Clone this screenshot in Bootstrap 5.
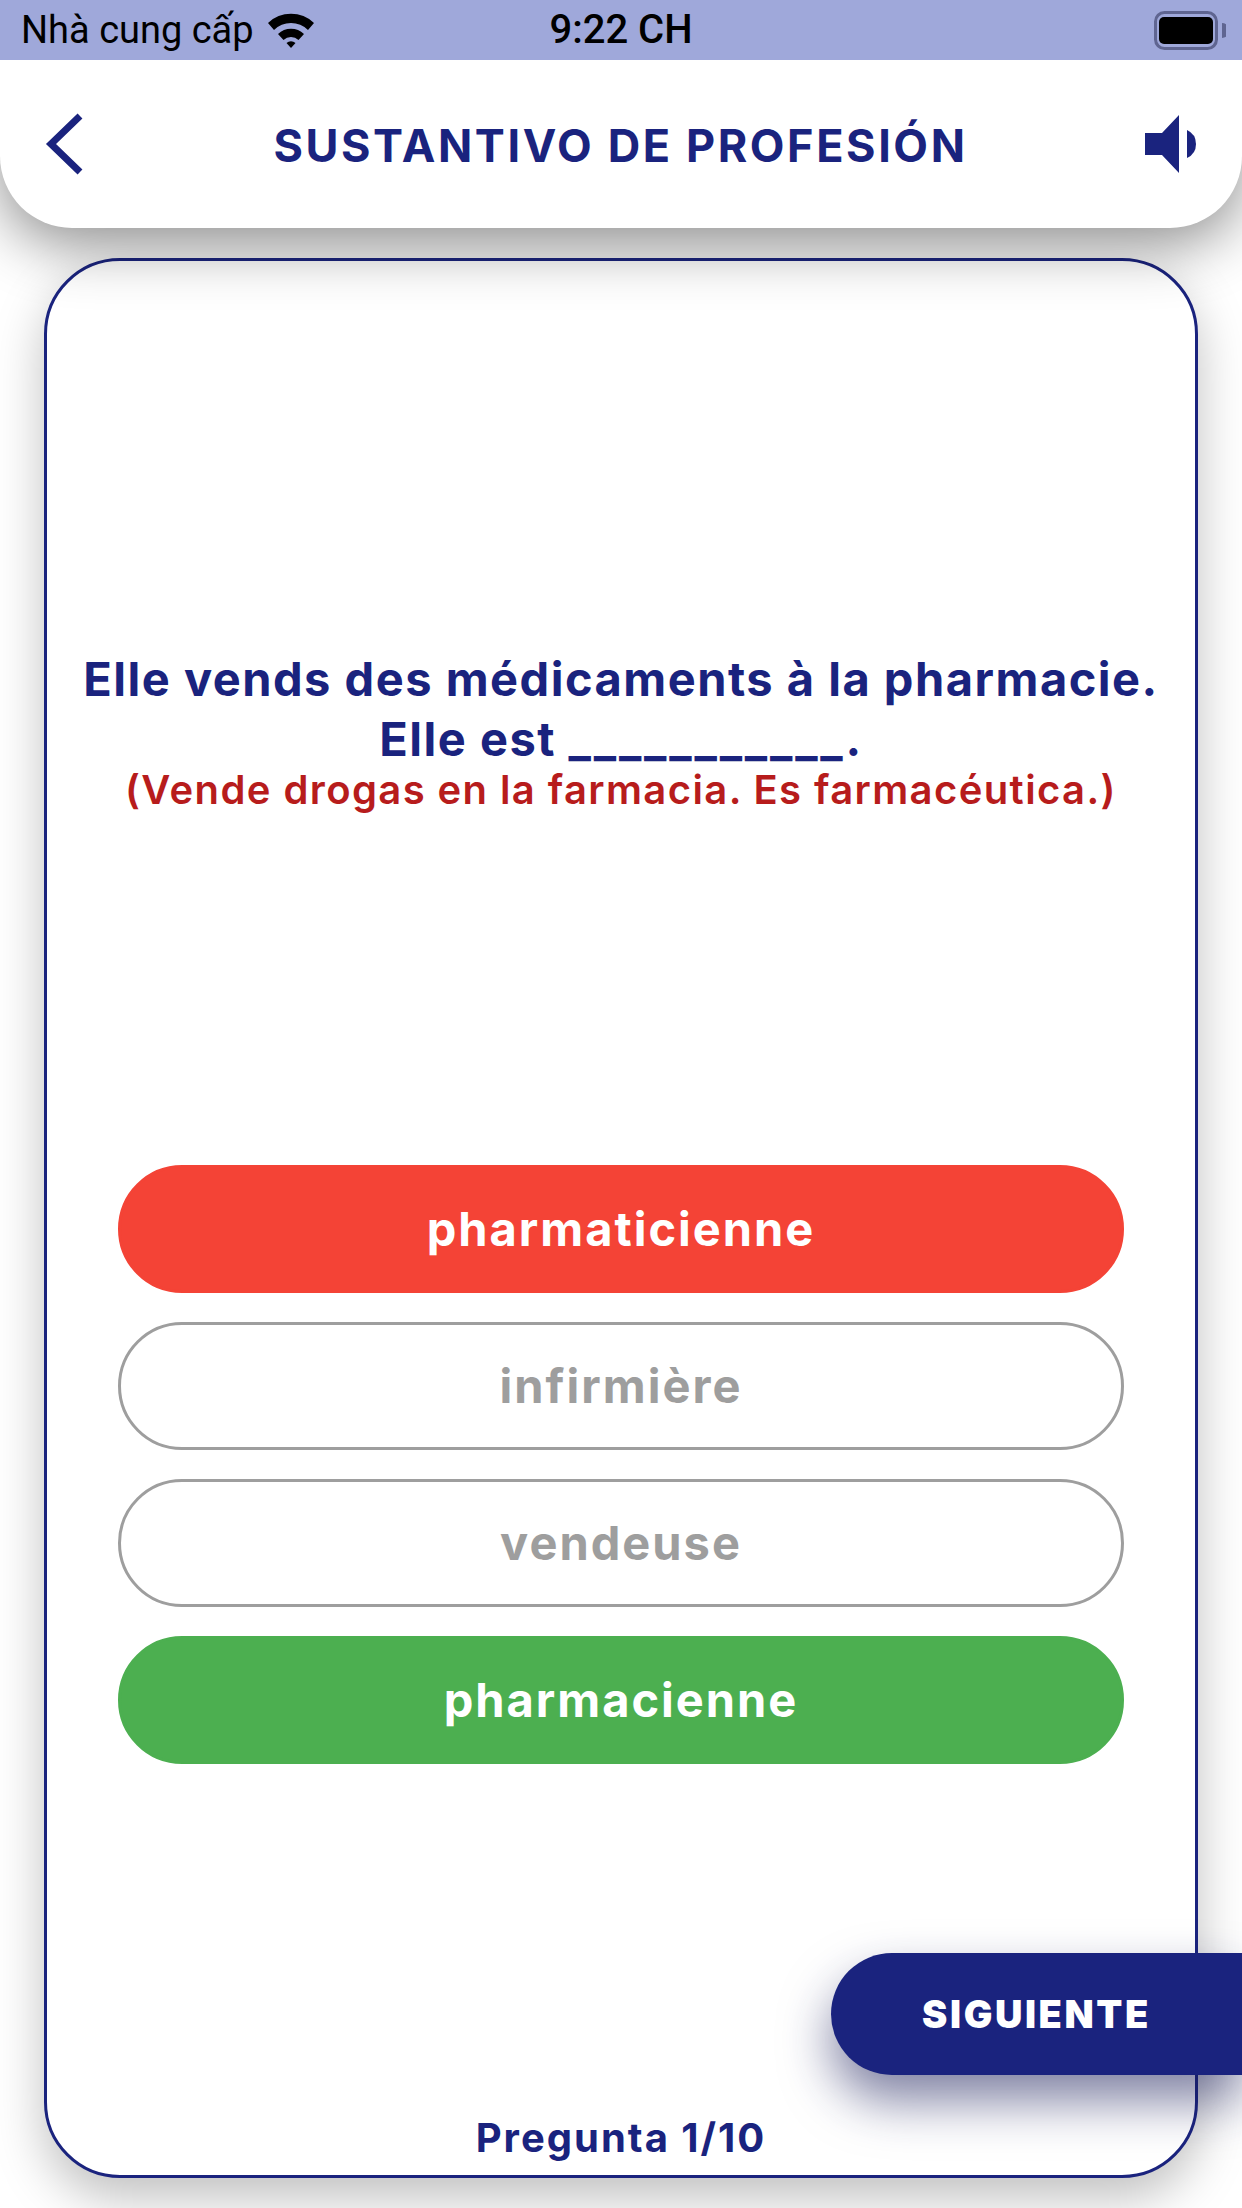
<!DOCTYPE html>
<html lang="en">
<head>
  <meta charset="UTF-8">
  <meta name="viewport" content="width=device-width, initial-scale=1">
  <title>Sustantivo de profesión</title>
  <link rel="stylesheet" href="https://cdn.jsdelivr.net/npm/bootstrap@5.3.0/dist/css/bootstrap.min.css">
  <style>
    body {
      font-family: "Inter", "Liberation Sans", sans-serif;
      background-color: #fff;
      width: 1242px;
      height: 2208px;
      overflow: hidden;
      color: #1a237e;
    }
    .status-strip {
      height: 60px;
      background-color: #9fa8da;
      color: #000;
      font-family: "Roboto", "Liberation Sans", sans-serif;
      font-size: 38px;
      padding: 0 16px 0 21px;
      position: relative;
      z-index: 3;
    }
    .status-clock {
      position: absolute;
      left: 0;
      right: 0;
      text-align: center;
      font-size: 40px;
      font-weight: 500;
    }
    .status-wifi {
      margin-left: 14px;
    }
    .top-head {
      height: 168px;
      background-color: #fff;
      border-radius: 0 0 72px 72px;
      box-shadow: 0 16px 60px rgba(0, 0, 0, .45);
      padding: 0 46px 0 45px;
      position: relative;
      z-index: 2;
    }
    .top-title {
      font-size: 45px;
      font-weight: 700;
      letter-spacing: 2.6px;
      margin: 3px 0 0;
    }
    .quiz-panel {
      position: relative;
      height: 1920px;
      margin: 30px 44px 0;
      background-color: #fff;
      border: 3px solid #1a237e;
      border-radius: 76px;
      box-shadow: 0 20px 50px rgba(0, 0, 0, .25);
    }
    .question-box {
      height: 904px;
      padding-top: 388px;
      text-align: center;
    }
    .question-fr {
      font-size: 47px;
      line-height: 60px;
      font-weight: 700;
      letter-spacing: 1.5px;
      margin: 0;
    }
    .blank-line {
      letter-spacing: 2.8px;
    }
    .question-es {
      font-size: 40px;
      line-height: 42px;
      font-weight: 600;
      letter-spacing: 1.4px;
      color: #b71c1c;
      margin: 0;
    }
    .answer-list {
      padding: 0 71px;
      gap: 29px;
    }
    .answer-btn {
      height: 128px;
      border-radius: 64px;
      font-size: 47px;
      font-weight: 700;
      letter-spacing: 2px;
      padding: 0;
      border: 3px solid #9e9e9e;
      color: #9e9e9e;
      background-color: #fff;
    }
    .answer-wrong {
      background-color: #f44336;
      border-color: #f44336;
      color: #fff;
    }
    .answer-right {
      background-color: #4caf50;
      border-color: #4caf50;
      color: #fff;
    }
    .next-btn {
      position: absolute;
      left: 784px;
      top: 1692px;
      width: 411px;
      height: 122px;
      background-color: #1a237e;
      color: #fff;
      border: 0;
      border-radius: 61px 0 0 61px;
      font-size: 38px;
      font-weight: 900;
      letter-spacing: 2.6px;
      padding: 0;
      box-shadow: 0 26px 50px rgba(26, 30, 90, .55);
    }
    .counter-line {
      position: absolute;
      left: 0;
      right: 0;
      bottom: 13px;
      text-align: center;
      font-size: 40px;
      line-height: 48px;
      font-weight: 700;
      letter-spacing: 2px;
    }
  </style>
</head>
<body>
  <!-- status bar -->
  <div class="status-strip d-flex align-items-center justify-content-between">
    <div class="d-flex align-items-center">
      <span>Nhà cung cấp</span>
      <svg class="status-wifi" width="46" height="36" viewBox="0 0 46 36">
        <path d="M0 11 A33 33 0 0 1 46 11 L40 18 A24 24 0 0 0 6 18 Z" fill="#000"/>
        <path d="M10 22 A19 19 0 0 1 36 22 L30.500 28 A11 11 0 0 0 15.500 28 Z" fill="#000"/>
        <path d="M18.500 31 A7 7 0 0 1 27.500 31 L23 36 Z" fill="#000"/>
      </svg>
    </div>
    <span class="status-clock">9:22 CH</span>
    <svg width="72" height="39" viewBox="0 0 72 39">
      <rect x="1.500" y="1.500" width="61" height="36" rx="9" fill="none" stroke="#5f6591" stroke-width="3"/>
      <rect x="5" y="6" width="54" height="27" rx="5" fill="#000"/>
      <path d="M68 12 A7 7 0 0 1 68 27 Z" fill="#5f6591"/>
    </svg>
  </div>

  <!-- header -->
  <header class="top-head d-flex align-items-center justify-content-between">
    <svg width="51" height="62" viewBox="0 0 51 62">
      <path d="M35 3 L6 31 L35 59" fill="none" stroke="#1a237e" stroke-width="7"/>
    </svg>
    <h1 class="top-title">SUSTANTIVO DE PROFESIÓN</h1>
    <svg width="51" height="58" viewBox="0 0 51 58">
      <path d="M0 18 H17 L34 0 V58 L17 40 H0 Z" fill="#1a237e"/>
      <path d="M42 15 A15.400 15.400 0 0 1 42 43 Z" fill="#1a237e"/>
    </svg>
  </header>

  <!-- quiz card -->
  <main class="quiz-panel">
    <div class="question-box">
      <p class="question-fr">Elle vends des médicaments à la pharmacie.<br>Elle est <span class="blank-line">___________</span>.</p>
      <p class="question-es">(Vende drogas en la farmacia. Es farmacéutica.)</p>
    </div>
    <div class="answer-list d-flex flex-column">
      <button class="btn answer-btn answer-wrong" type="button">pharmaticienne</button>
      <button class="btn answer-btn" type="button">infirmière</button>
      <button class="btn answer-btn" type="button">vendeuse</button>
      <button class="btn answer-btn answer-right" type="button">pharmacienne</button>
    </div>
    <div class="counter-line">Pregunta 1/10</div>
    <button class="next-btn" type="button">SIGUIENTE</button>
  </main>

  <script src="https://cdn.jsdelivr.net/npm/bootstrap@5.3.0/dist/js/bootstrap.bundle.min.js"></script>
</body>
</html>
